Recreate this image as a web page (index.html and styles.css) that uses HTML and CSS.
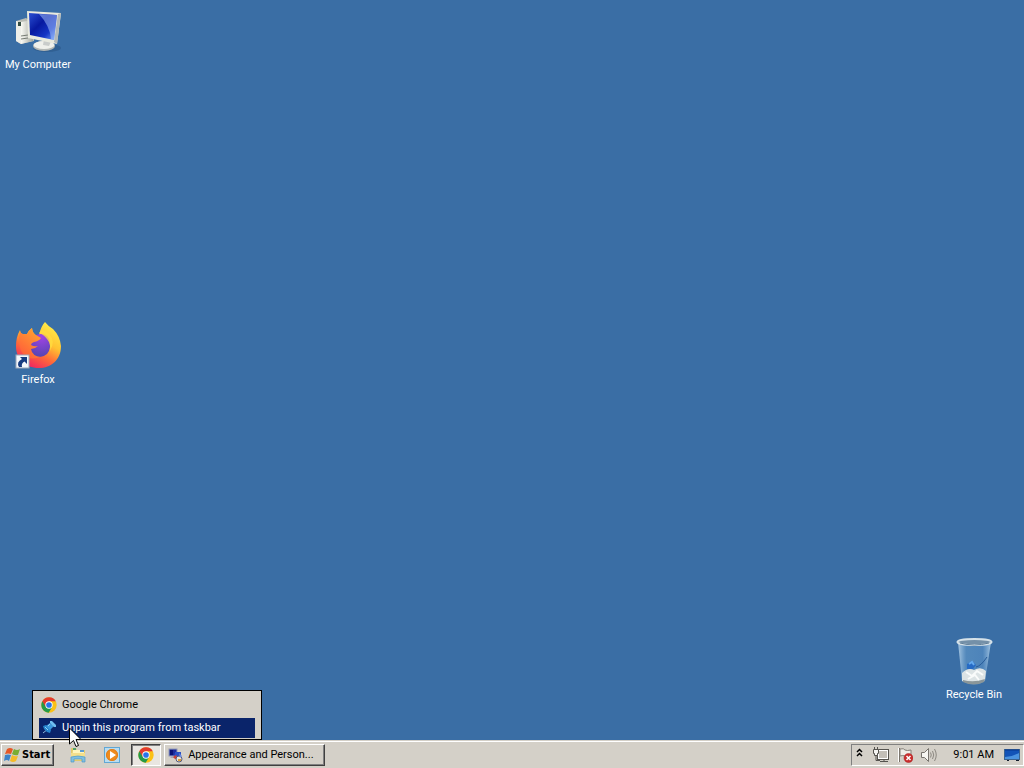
FILE: index.html
```html
<!DOCTYPE html>
<html lang="en">
<head>
<meta charset="utf-8">
<title>Desktop</title>
<link rel="stylesheet" href="styles.css">
</head>
<body>
<svg class="defs" aria-hidden="true">
  <symbol id="chrome" viewBox="0 0 48 48">
    <circle cx="24" cy="24" r="23" fill="#fbc116"/>
    <path d="M24 24L4 12.5A23 23 0 0 0 23 47L34 29Z" fill="#249a48"/>
    <path d="M24 13H44.500A23 23 0 0 0 4 12.500L14.500 30Z" fill="#e33b2e"/>
    <circle cx="24" cy="24" r="11" fill="#fff"/>
    <circle cx="24" cy="24" r="8.500" fill="#2874e8"/>
  </symbol>
</svg>
<main class="desktop">
  <button class="shortcut computer">
    <svg width="48" height="48" viewBox="0 0 48 48" aria-hidden="true">
      <defs>
        <linearGradient id="screen" x1="0" y1="0" x2="1" y2="1"><stop offset="0" stop-color="#2a50d2"/><stop offset=".4" stop-color="#0719a0"/><stop offset=".7" stop-color="#1535c5"/><stop offset="1" stop-color="#79a9fa"/></linearGradient>
        <linearGradient id="case" x1="0" y1="0" x2="1" y2="0"><stop offset="0" stop-color="#fafaf4"/><stop offset="1" stop-color="#a3a69e"/></linearGradient>
      </defs>
      <path d="M2 14L12 11L20 16V34L7 37L2 34Z" fill="#b9bcb5"/>
      <path d="M2 14L7 15V37L2 34Z" fill="#eeeee8"/>
      <path d="M7 15L19 13V34L7 37Z" fill="url(#case)"/>
      <rect x="4" y="15" width="3" height="4" fill="#344d42"/>
      <path d="M7 29L14 28M7 32L14 31" stroke="#777c74"/>
      <ellipse cx="33" cy="41" rx="14" ry="4" fill="#244b77" opacity=".4"/>
      <path d="M31 31H38V41H29Z" fill="#c2c5c2"/>
      <ellipse cx="30" cy="39" rx="11" ry="5" fill="#b3b7b4"/>
      <ellipse cx="30" cy="38" rx="10.500" ry="4" fill="#eff0eb"/>
      <path d="M30 32H38L35 39L29 38Z" fill="#c9ccca"/>
      <path d="M13 4L47 6L43 37L14 31Z" fill="#e9eadf"/>
      <path d="M47 6L43 37L40 35L44 7Z" fill="#b3b8b8"/>
      <path d="M15 6L43 8L40 33L16 28Z" fill="url(#screen)"/>
      <path d="M25 7L43 8L40 33L37 32Q36 19 25 7Z" fill="#a9c7ff" opacity=".5"/>
    </svg>
    <span>My Computer</span>
  </button>
  <button class="shortcut firefox">
    <svg width="48" height="48" viewBox="0 0 48 48" aria-hidden="true">
      <defs>
        <linearGradient id="flame" x1=".8" y1="0" x2=".25" y2="1"><stop offset="0" stop-color="#fff14c"/><stop offset=".4" stop-color="#ffc231"/><stop offset=".66" stop-color="#ff6b38"/><stop offset="1" stop-color="#ef1b66"/></linearGradient>
        <linearGradient id="head" x1=".8" y1="0" x2=".2" y2="1"><stop offset="0" stop-color="#ffa52f"/><stop offset="1" stop-color="#ff5a3a"/></linearGradient>
        <radialGradient id="globe" cx=".6" cy=".1" r=".9"><stop offset="0" stop-color="#a243e4"/><stop offset="1" stop-color="#5445b2"/></radialGradient>
      </defs>
      <path d="M31 0Q34 4 39 7Q46 14 47 24C47 38 37 46 25 46C11 46 2 37 2 24Q2 15 6 8Q6 11 8 12L13 12Q15 8 18 6Q18 10 21 13H25Q27 4 31 0Z" fill="url(#flame)"/>
      <path d="M22 13Q31 10 35 17Q38 26 33 32Q26 38 18 33Q13 28 16 21Z" fill="url(#globe)"/>
      <path d="M25 11Q29 12 33 17Q37 22 36 29Q42 19 35 12Q31 8 28 8Z" fill="#ffdc40" opacity=".8"/>
      <path d="M6 9Q7 12 9 12L13 12Q15 8 18 6Q18 10 22 13L27 16Q25 19 20 20Q17 21 17 23Q20 25 24 24Q21 27 17 27Q18 34 27 35Q15 39 9 32Q3 24 6 9Z" fill="url(#head)"/>
      <rect x="2" y="33" width="13" height="13" fill="#f4f7fb" stroke="#9ba7b9"/>
      <path d="M6 35H13V42L10.500 39.500Q7 41 8 45H5Q2 40 8 37Z" fill="#173c80"/>
    </svg>
    <span>Firefox</span>
  </button>
  <button class="shortcut recycle">
    <svg width="48" height="48" viewBox="0 0 48 48" aria-hidden="true">
      <defs><linearGradient id="glass"><stop offset="0" stop-color="#c2dcf0" stop-opacity=".8"/><stop offset=".25" stop-color="#639aca" stop-opacity=".6"/><stop offset=".75" stop-color="#5a92c8" stop-opacity=".6"/><stop offset="1" stop-color="#bddaf0" stop-opacity=".8"/></linearGradient></defs>
      <path d="M8 5L12 44Q25 51 35 44L41 5Z" fill="url(#glass)"/>
      <path d="M12 36Q18 30 24 33Q31 29 36 34L35 43Q25 50 12 44Z" fill="#dce3e5"/>
      <path d="M13 43Q24 46 35 42L34 45Q24 50 13 45Z" fill="#8a9699"/>
      <path d="M16 35L22 39L27 34L33 38M18 42L25 38L29 43" stroke="#f9fbfb" stroke-width="2" fill="none"/>
      <path d="M17 27L22 24L26 28L23 32H17Z" fill="#266bc5"/>
      <path d="M26 30Q31 29 37 20" stroke="#275b99" fill="none"/>
      <path d="M19 27L22 25L24 28" stroke="#64a9ed" stroke-width="2" fill="none"/>
      <ellipse cx="24.500" cy="5" rx="17" ry="3" fill="#7490a8" stroke="#d6e2e9" stroke-width="2"/>
      <path d="M10 6Q24 10 39 6" stroke="#607e98" fill="none"/>
    </svg>
    <span>Recycle Bin</span>
  </button>
</main>

<div class="jump-menu" role="menu">
  <button class="menu-item" role="menuitem"><svg width="16" height="16" aria-hidden="true"><use href="#chrome"/></svg>Google Chrome</button>
  <button class="menu-item selected" role="menuitem">
    <svg width="16" height="16" viewBox="0 0 16 16" aria-hidden="true"><path d="M2 13L7 9" stroke="#8dbbe0"/><path d="M2 6L5 5L10 10L9 13L6 12L3 9Z" fill="#2584ce"/><path d="M5 6L9 3L13 6L9 10Z" fill="#3d98dc"/><path d="M9 1L11 1L15 5L15 7L13 7L9 3Z" fill="#6fbdf0"/><path d="M4 7L7 10M7 6L9 4" stroke="#8fd0f5"/></svg>
    Unpin this program from taskbar
  </button>
</div>

<footer class="taskbar">
  <button class="start">
    <svg width="17" height="16" viewBox="0 0 17 16" aria-hidden="true"><path d="M3 2Q6 0 9 2L7 7Q4 6 1 7Z" fill="#e65826"/><path d="M10 2Q13 4 16 2L14 8Q11 9 8 7Z" fill="#7aad32"/><path d="M1 8Q4 7 7 8L5 14Q3 12 0 14Z" fill="#3d83c8"/><path d="M8 8Q11 10 14 9L12 14Q9 16 6 14Z" fill="#f5bb27"/></svg>
    Start
  </button>
  <nav class="pinned" aria-label="Pinned programs">
    <button class="pin" aria-label="Windows Explorer"><svg width="16" height="16" viewBox="0 0 16 16" aria-hidden="true"><path d="M1 1H6L7 3H15V14H1Z" fill="#e3c969"/><path d="M3 3H12L14 5V12H2Z" fill="#fff6bd"/><rect x="3" y="1" width="3" height="2" fill="#55a269"/><rect x="10" y="3" width="4" height="2" fill="#5c9bd0"/><path d="M1 6H15V13H1Z" fill="#f4df8a"/><path d="M1 10Q8 8 15 10V15H12V12H4V15H1Z" fill="#80bfe1" stroke="#4b99c7" stroke-width=".7"/></svg></button>
    <button class="pin" aria-label="Media Player"><svg width="16" height="16" viewBox="0 0 16 16" aria-hidden="true"><rect x=".5" y=".5" width="15" height="15" fill="#b9dcf0" stroke="#62a7d4"/><circle cx="8" cy="8" r="6" fill="#ef8c1d"/><circle cx="8" cy="8" r="5.500" fill="none" stroke="#e07d1c"/><path d="M6 4L12 8L6 12Z" fill="#fff"/></svg></button>
    <button class="pin active" aria-label="Google Chrome"><svg width="16" height="16" aria-hidden="true"><use href="#chrome"/></svg></button>
  </nav>
  <button class="window-button">
    <svg width="16" height="16" viewBox="0 0 16 16" aria-hidden="true"><rect x="1" y="2" width="8" height="7" fill="#1c2b9d" stroke="#9299b5"/><path d="M2 3H5V8H2Z" fill="#0a1276"/><path d="M2 11H8L7 9H4Z" fill="#a5a7b5"/><path d="M7 5H13V11L9 13L6 10Z" fill="#284fc4"/><path d="M5 10L8 8L10 11L7 12Z" fill="#d03e35"/><circle cx="11" cy="12" r="3" fill="#e8e3dc" stroke="#585b77"/><path d="M10 12H13V14H10Z" fill="#de9f36"/><path d="M11 6L14 9L12 11" fill="#6c8ce0"/></svg>
    <span>Appearance and Person...</span>
  </button>
  <div class="tray">
    <button class="tray-icon chevron" aria-label="Show hidden icons"><svg width="7" height="10" viewBox="0 0 7 10" aria-hidden="true"><path d="M1 4L3.500 1.500L6 4M1 8L3.500 5.500L6 8" fill="none" stroke="#000" stroke-width="1.500"/></svg></button>
    <button class="tray-icon" aria-label="Network"><svg width="16" height="16" viewBox="0 0 16 16" aria-hidden="true"><rect x="4.500" y="2.500" width="11" height="10" fill="#c3bfb8" stroke="#55534f"/><rect x="5.500" y="3.500" width="9" height="8" fill="none" stroke="#fff"/><path d="M7 14.500H15M11 13V14" stroke="#55534f"/><path d="M.500 2.500H5.500V6.500H4.500V8.500H1.500V6.500H.500Z" fill="#f6f5f2" stroke="#55534f"/><path d="M1.500 0V3M4.500 0V3M3 8V13.500H7" stroke="#55534f" fill="none"/></svg></button>
    <button class="tray-icon" aria-label="Action Center"><svg width="16" height="16" viewBox="0 0 16 16" aria-hidden="true"><path d="M2.500 1V15" stroke="#777169"/><path d="M1.500 1V15" stroke="#fff"/><path d="M3 2Q7 1 8 3Q10 4 14 3V10Q10 12 8 9Q6 8 3 9Z" fill="#efede8" stroke="#858078"/><circle cx="11.500" cy="11" r="4.500" fill="#ca2d2d" stroke="#a62020" stroke-width=".5"/><path d="M9.500 9L13.500 13M13.500 9L9.500 13" stroke="#fff" stroke-width="1.500"/></svg></button>
    <button class="tray-icon" aria-label="Volume"><svg width="16" height="16" viewBox="0 0 16 16" aria-hidden="true"><path d="M.500 5.500H3.500L7.500 1.500V14.500L3.500 10.500H.500Z" fill="#f7f6f2" stroke="#77736d"/><path d="M9.500 5.500Q11 8 9.500 10.500M11.500 4Q14 8 11.500 12M13.500 2Q17 8 13.500 14" fill="none" stroke="#8c8881"/></svg></button>
    <time class="clock">9:01 AM</time>
    <button class="tray-icon show-desktop" aria-label="Show desktop"><svg width="16" height="14" viewBox="0 0 16 14" aria-hidden="true"><rect x=".5" y="1.500" width="15" height="10" fill="#1253b7" stroke="#3c638f"/><path d="M1 9Q8 9 15 5V11H1Z" fill="#4b93df"/><path d="M1 2H15" stroke="#06378b"/><path d="M3 12.500H5M12 12.500H15" stroke="#111b2c"/></svg></button>
  </div>
</footer>

<svg class="cursor" width="13" height="21" viewBox="0 0 13 21" aria-hidden="true"><path d="M.500 1V17L4.500 13.500L7 19.500L9.500 18.500L7 12.500H12Z" fill="#fff" stroke="#000"/></svg>
</body>
</html>
```
FILE: styles.css
```css
* { box-sizing: border-box; }

body {
  position: relative;
  display: flex;
  flex-direction: column;
  min-height: 100vh;
  margin: 0;
  overflow: hidden;
  background: #3a6ea5;
  color: #000;
  font: 11px/14px Tahoma, Roboto, sans-serif;
}

button {
  margin: 0;
  padding: 0;
  border: 0;
  background: none;
  color: inherit;
  font: inherit;
}

svg { display: block; flex: none; }

.defs { position: absolute; width: 0; height: 0; }

.desktop { position: relative; flex: 1; }

.shortcut {
  position: absolute;
  display: flex;
  flex-direction: column;
  align-items: center;
  gap: 3px;
  width: 76px;
  color: #fff;
}

.computer { left: 0; top: 7px; }
.firefox { left: 0; top: 322px; }
.recycle { right: 12px; bottom: 38px; }

.jump-menu {
  position: absolute;
  z-index: 1;
  left: 32px;
  bottom: 28px;
  display: flex;
  flex-direction: column;
  gap: 3px;
  width: 230px;
  padding: 4px 6px 1px;
  border: 1px solid #000;
  background: #d4d0c8;
}

.menu-item {
  display: flex;
  align-items: center;
  gap: 5px;
  height: 20px;
  padding: 0 2px;
  white-space: nowrap;
}

.selected { background: #0a246a; color: #fff; }

.taskbar {
  display: flex;
  align-items: center;
  height: 28px;
  padding: 0 0 0 1px;
  border-top: 1px solid #d4d0c8;
  background: #d4d0c8;
  box-shadow: inset 0 1px #fff;
}

.start,
.window-button {
  display: flex;
  align-items: center;
  height: 22px;
  border: 1px solid;
  border-color: #fff #404040 #404040 #fff;
  box-shadow: inset -1px -1px #808080;
}

.start {
  gap: 1px;
  padding: 0 3px 0 2px;
  font-weight: bold;
  font-size: 11px;
  font-family: Tahoma, "DejaVu Sans Condensed", sans-serif;
}

.pinned { display: flex; gap: 4px; margin-left: 9px; }

.pin {
  display: flex;
  align-items: center;
  justify-content: center;
  width: 30px;
  height: 22px;
}

.active {
  border: 1px solid;
  border-color: #404040 #fff #fff #404040;
  background: #e9e6e1;
  box-shadow: inset 1px 1px #808080;
}

.window-button {
  gap: 4px;
  width: 161px;
  margin-left: 3px;
  padding: 0 3px;
  white-space: nowrap;
}

.tray {
  display: flex;
  align-items: center;
  gap: 8px;
  height: 22px;
  margin-left: auto;
  padding: 0 3px 0 4px;
  border: 1px solid;
  border-color: #808080 #fff #fff #808080;
}

.chevron { padding: 0 2px 3px 0; }
.clock { margin: 0 2px 0 8px; }
.cursor { position: absolute; z-index: 2; left: 69px; bottom: 20px; }
```
